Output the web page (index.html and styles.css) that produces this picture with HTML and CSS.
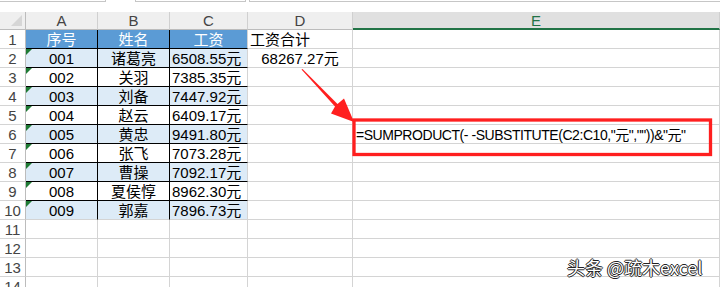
FILE: index.html
```html
<!DOCTYPE html>
<html lang="zh-CN">
<head>
<meta charset="utf-8">
<title>工资合计</title>
<link rel="stylesheet" href="styles.css">
</head>
<body>
<div class="page">
  <div class="topbar">
    <div class="box box-name"></div>
    <div class="box box-mid"></div>
    <div class="box box-formula"></div>
  </div>
  <div class="sheet">
    <div class="c corner"><span class="corner-tri"></span></div>
    <div class="c ch">A</div>
    <div class="c ch">B</div>
    <div class="c ch">C</div>
    <div class="c ch">D</div>
    <div class="c ch sel">E</div>

    <div class="c rh">1</div>
    <div class="c hd bb br">序号</div>
    <div class="c hd bb br">姓名</div>
    <div class="c hd bb">工资</div>
    <div class="c">工资合计</div>
    <div class="c"></div>

    <div class="c rh">2</div>
    <div class="c alt ctr tri bb br">001</div>
    <div class="c alt ctr bb br">诸葛亮</div>
    <div class="c alt bb">6508.55元</div>
    <div class="c ctr">68267.27元</div>
    <div class="c"></div>

    <div class="c rh">3</div>
    <div class="c ctr tri bb br">002</div>
    <div class="c ctr bb br">关羽</div>
    <div class="c bb">7385.35元</div>
    <div class="c"></div>
    <div class="c"></div>

    <div class="c rh">4</div>
    <div class="c alt ctr tri bb br">003</div>
    <div class="c alt ctr bb br">刘备</div>
    <div class="c alt bb">7447.92元</div>
    <div class="c"></div>
    <div class="c"></div>

    <div class="c rh">5</div>
    <div class="c ctr tri bb br">004</div>
    <div class="c ctr bb br">赵云</div>
    <div class="c bb">6409.17元</div>
    <div class="c"></div>
    <div class="c"></div>

    <div class="c rh">6</div>
    <div class="c alt ctr tri bb br">005</div>
    <div class="c alt ctr bb br">黄忠</div>
    <div class="c alt bb">9491.80元</div>
    <div class="c"></div>
    <div class="c formula">=SUMPRODUCT(- -SUBSTITUTE(C2:C10,"元",""))&amp;"元"</div>

    <div class="c rh">7</div>
    <div class="c ctr tri bb br">006</div>
    <div class="c ctr bb br">张飞</div>
    <div class="c bb">7073.28元</div>
    <div class="c"></div>
    <div class="c"></div>

    <div class="c rh">8</div>
    <div class="c alt ctr tri bb br">007</div>
    <div class="c alt ctr bb br">曹操</div>
    <div class="c alt bb">7092.17元</div>
    <div class="c"></div>
    <div class="c"></div>

    <div class="c rh">9</div>
    <div class="c ctr tri bb br">008</div>
    <div class="c ctr bb br">夏侯惇</div>
    <div class="c bb">8962.30元</div>
    <div class="c"></div>
    <div class="c"></div>

    <div class="c rh">10</div>
    <div class="c alt ctr tri br">009</div>
    <div class="c alt ctr br">郭嘉</div>
    <div class="c alt">7896.73元</div>
    <div class="c"></div>
    <div class="c"></div>

    <div class="c rh">11</div>
    <div class="c"></div><div class="c"></div><div class="c"></div><div class="c"></div><div class="c"></div>
    <div class="c rh">12</div>
    <div class="c"></div><div class="c"></div><div class="c"></div><div class="c"></div><div class="c"></div>
    <div class="c rh">13</div>
    <div class="c"></div><div class="c"></div><div class="c"></div><div class="c"></div><div class="c"></div>
    <div class="c rh">14</div>
    <div class="c"></div><div class="c"></div><div class="c"></div><div class="c"></div><div class="c"></div>
  </div>

  <svg class="annot" width="720" height="287" viewBox="0 0 720 287" aria-hidden="true">
    <polygon fill="#ff1f1f" points="301.5,69.5 302.5,69 337.5,104 344,98.5 354,122 331,113.5 335,106.5"/>
    <rect x="354" y="120" width="356.5" height="34.5" fill="none" stroke="#ff1f1f" stroke-width="3.3"/>
  </svg>

  <div class="watermark">头条 @疏木excel</div>
</div>
</body>
</html>
```

FILE: styles.css
```css
* { box-sizing: border-box; }

html, body {
  margin: 0;
  padding: 0;
  background: #ffffff;
}

.page {
  position: relative;
  width: 720px;
  height: 287px;
  overflow: hidden;
  font-family: "Liberation Sans", "Noto Sans CJK SC", sans-serif;
}

.topbar {
  height: 12px;
  display: flex;
  align-items: flex-start;
}

.box {
  height: 2px;
  border-bottom: 1px solid #c6c6c6;
}

.box-name {
  width: 106px;
  border-right: 1px solid #c6c6c6;
}

.box-mid {
  width: 111px;
  margin-left: 29px;
  border-left: 1px solid #c6c6c6;
  border-right: 1px solid #c6c6c6;
}

.box-formula {
  flex: 1;
  margin-left: 3px;
  border-left: 1px solid #c6c6c6;
}

.sheet {
  display: grid;
  grid-template-columns: 26px 72px 72px 78px 105px 1fr;
  grid-template-rows: 18px;
  grid-auto-rows: 19px;
}

.c {
  position: relative;
  border-right: 1px solid #d4d4d4;
  border-bottom: 1px solid #d4d4d4;
  font-size: 15px;
  line-height: 18px;
  padding: 1px 2px 0;
  white-space: nowrap;
  color: #000;
}

.corner {
  background: #efefef;
  border-right: 1px solid #bcbcbc;
  border-bottom: 1px solid #bcbcbc;
}

.corner-tri {
  position: absolute;
  right: 3px;
  bottom: 3px;
  width: 0;
  height: 0;
  border-style: solid;
  border-width: 0 0 11px 11px;
  border-color: transparent transparent #d6d6d6 transparent;
}

.ch {
  background: #efefef;
  color: #444;
  text-align: center;
  border-bottom: 1px solid #bcbcbc;
  border-right-color: #d0d0d0;
  padding-top: 0;
  line-height: 18px;
}

.ch.sel {
  background: #e0e0e0;
  color: #217346;
  border-bottom: 2px solid #217346;
  line-height: 17px;
}

.rh {
  color: #444;
  text-align: center;
  border-right: 1px solid #bcbcbc;
  padding: 1px 0 0;
}

.hd {
  background: #5b9bd5;
  color: #fff;
  text-align: center;
}

.alt { background: #ddebf7; }
.ctr { text-align: center; }
.bb { border-bottom-color: #000; }
.br { border-right-color: #000; }

.tri::before {
  content: "";
  position: absolute;
  left: 0;
  top: 0;
  border-style: solid;
  border-width: 6px 6px 0 0;
  border-color: #1e7b34 transparent transparent transparent;
}

.formula {
  padding-left: 3px;
  font-size: 14px;
  letter-spacing: -0.45px;
}

.annot {
  position: absolute;
  left: 0;
  top: 0;
  pointer-events: none;
}

.watermark {
  position: absolute;
  left: 567px;
  top: 256px;
  font-family: "Noto Sans CJK SC", "Liberation Sans", sans-serif;
  font-size: 18px;
  line-height: 22px;
  color: #ffffff;
  text-shadow: 1px 0 0 #222, -1px 0 0 #222, 0 1px 0 #222, 0 -1px 0 #222;
}
```
